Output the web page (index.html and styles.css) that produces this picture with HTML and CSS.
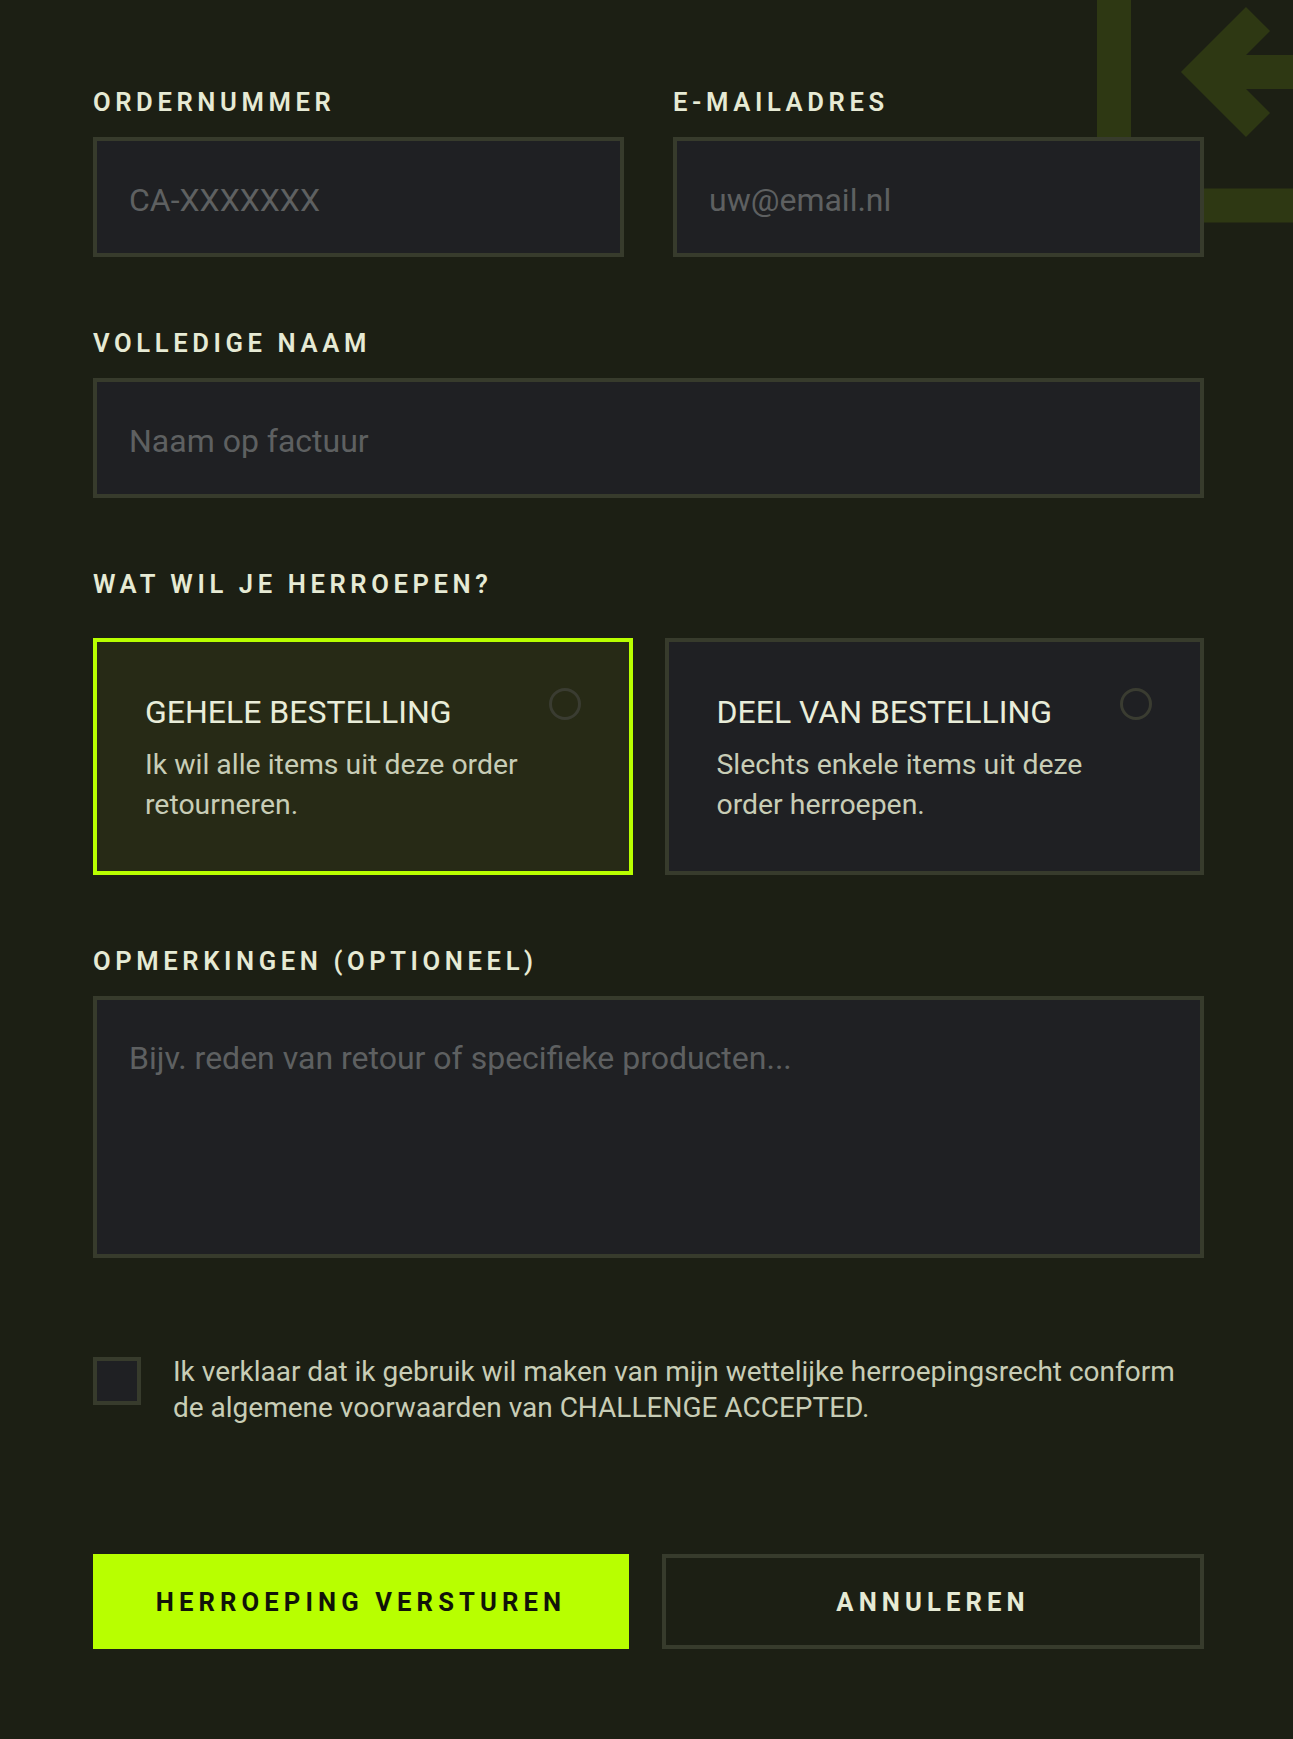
FILE: index.html
```html
<!DOCTYPE html>
<html lang="nl">
<head>
<meta charset="utf-8">
<title>Herroeping</title>
<link rel="stylesheet" href="styles.css">
</head>
<body>
<div class="page">
  <svg class="deco" viewBox="1050 0 243 260" aria-hidden="true">
    <path d="M1114 -20 V205.5 H1320" />
    <path d="M1258 19 L1205 72 L1258 125" />
    <path d="M1205 72 H1320" />
  </svg>
  <form class="form">
    <div class="row-two">
      <div class="field">
        <label class="label" for="order">ORDERNUMMER</label>
        <input id="order" class="input" type="text" placeholder="CA-XXXXXXX">
      </div>
      <div class="field">
        <label class="label" for="email">E-MAILADRES</label>
        <input id="email" class="input" type="email" placeholder="uw@email.nl">
      </div>
    </div>
    <div class="field">
      <label class="label" for="name">VOLLEDIGE NAAM</label>
      <input id="name" class="input" type="text" placeholder="Naam op factuur">
    </div>
    <div class="field">
      <span class="label label-options">WAT WIL JE HERROEPEN?</span>
      <div class="options">
        <div class="option option-selected">
          <div class="option-text">
            <div class="option-title">GEHELE BESTELLING</div>
            <div class="option-desc">Ik wil alle items uit deze order retourneren.</div>
          </div>
          <span class="radio"></span>
        </div>
        <div class="option">
          <div class="option-text">
            <div class="option-title">DEEL VAN BESTELLING</div>
            <div class="option-desc">Slechts enkele items uit deze order herroepen.</div>
          </div>
          <span class="radio"></span>
        </div>
      </div>
    </div>
    <div class="field">
      <label class="label" for="notes">OPMERKINGEN (OPTIONEEL)</label>
      <textarea id="notes" class="textarea" placeholder="Bijv. reden van retour of specifieke producten..."></textarea>
    </div>
    <div class="consent">
      <span class="checkbox"></span>
      <p class="consent-text">Ik verklaar dat ik gebruik wil maken van mijn wettelijke herroepingsrecht conform de algemene voorwaarden van CHALLENGE ACCEPTED.</p>
    </div>
    <div class="actions">
      <button type="button" class="btn btn-primary">HERROEPING VERSTUREN</button>
      <button type="button" class="btn btn-secondary">ANNULEREN</button>
    </div>
  </form>
</div>
</body>
</html>
```
FILE: styles.css
```css
* {
  box-sizing: border-box;
}

body {
  margin: 0;
  background: #1c1f14;
  color: #e6ead4;
  font-family: Roboto, "Liberation Sans", sans-serif;
}

.page {
  position: relative;
  min-height: 1739px;
  padding: 87px 89px 89px 93px;
  overflow: hidden;
}

.deco {
  position: absolute;
  top: 0;
  right: 0;
  width: 243px;
  height: 260px;
  z-index: 0;
}

.deco path {
  fill: none;
  stroke: #2e3813;
  stroke-width: 34;
  stroke-linejoin: miter;
  stroke-linecap: butt;
}

.form {
  position: relative;
  z-index: 1;
  display: flex;
  flex-direction: column;
  gap: 71px;
}

.row-two {
  display: grid;
  grid-template-columns: 1fr 1fr;
  column-gap: 49px;
}

.field {
  display: flex;
  flex-direction: column;
}

.label {
  display: block;
  font-size: 25.6px;
  line-height: 30px;
  font-weight: 600;
  letter-spacing: 0.18em;
  color: #e6ead4;
  margin-bottom: 20px;
}

.label-options {
  margin-bottom: 39px;
}

.input,
.textarea {
  display: block;
  width: 100%;
  background: #1f2023;
  border: 4px solid #373b2c;
  border-radius: 0;
  color: #e6ead4;
  font-family: Roboto, "Liberation Sans", sans-serif;
  font-size: 32px;
  outline: none;
  margin: 0;
}

.input {
  height: 120px;
  padding: 5px 33px 0 32px;
}

.textarea {
  height: 262px;
  padding: 39px 33px 37px 32px;
  line-height: 38px;
  resize: none;
}

.input::placeholder,
.textarea::placeholder {
  color: #5e6061;
  opacity: 1;
}

.options {
  display: grid;
  grid-template-columns: 1fr 1fr;
  column-gap: 32px;
}

.option {
  display: flex;
  align-items: flex-start;
  background: #1f2023;
  border: 4px solid #373b2c;
  padding: 51px 48px 46px 48px;
}

.option-selected {
  background: #272a16;
  border-color: #b8ff00;
}

.option-text {
  flex: 1;
}

.option-title {
  font-size: 32px;
  line-height: 38px;
  color: #e9edd9;
}

.option-desc {
  margin-top: 14px;
  font-size: 28.4px;
  line-height: 40px;
  color: #c8cdb6;
}

.radio {
  flex: none;
  width: 32px;
  height: 32px;
  margin-top: -5px;
  border: 3px solid #3a3c31;
  border-radius: 50%;
}

.consent {
  display: flex;
  align-items: flex-start;
  gap: 32px;
  margin-top: 25px;
}

.checkbox {
  flex: none;
  width: 48px;
  height: 48px;
  margin-top: 3px;
  background: #1f2023;
  border: 4px solid #373b2c;
}

.consent-text {
  margin: 0;
  font-size: 28px;
  line-height: 36px;
  color: #c8cdb6;
}

.actions {
  display: grid;
  grid-template-columns: 536px 1fr;
  column-gap: 33px;
  margin-top: 57px;
}

.btn {
  height: 95px;
  margin: 0;
  font-family: Roboto, "Liberation Sans", sans-serif;
  font-size: 25.6px;
  font-weight: 700;
  letter-spacing: 0.2em;
  border-radius: 0;
  cursor: pointer;
}

.btn-primary {
  background: #b8ff00;
  color: #111308;
  border: none;
}

.btn-secondary {
  background: transparent;
  color: #e6ead4;
  border: 4px solid #373b2c;
}
```
